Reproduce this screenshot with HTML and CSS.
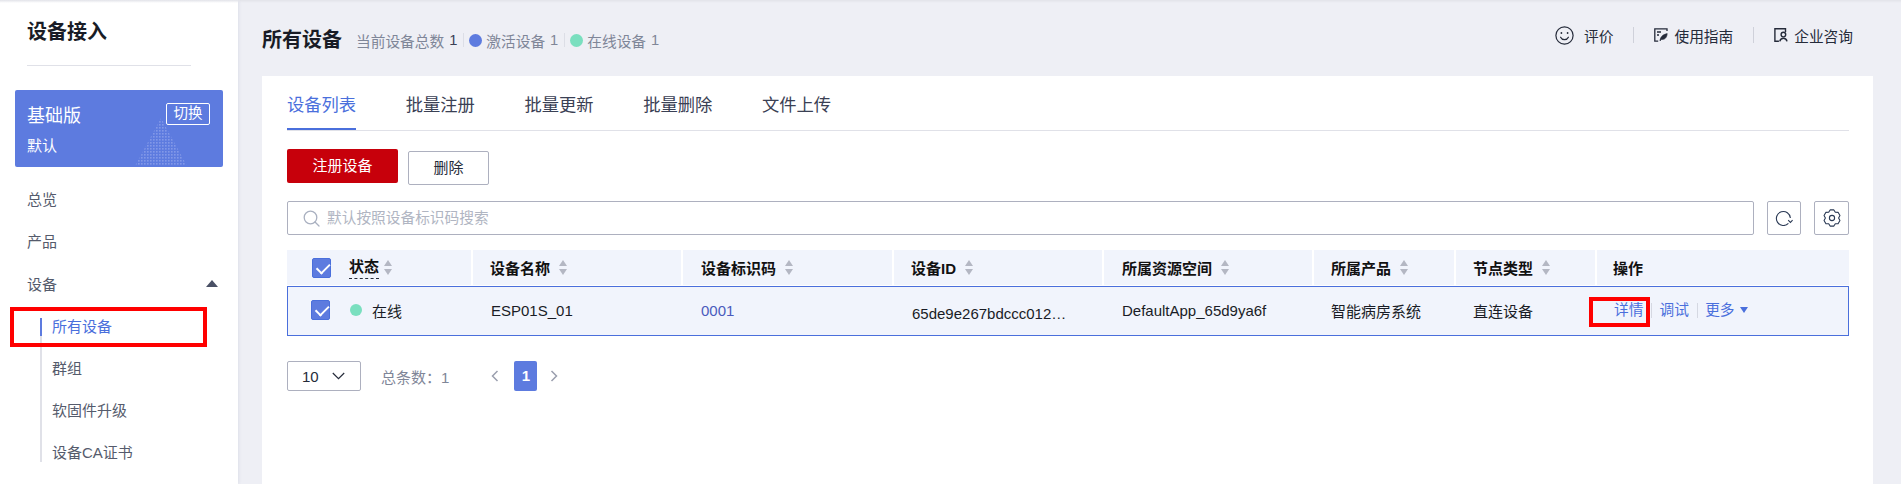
FILE: index.html
```html
<!DOCTYPE html>
<html lang="zh-CN">

<head>
    <meta charset="UTF-8">
    <title>所有设备</title>
    <link rel="stylesheet" href="styles.css">
</head>

<body>

    <aside class="sidebar">
        <h1 class="side-title">设备接入</h1>
        <div class="side-line"></div>

        <div class="plan">
            <svg class="plan-deco" width="52" height="48" viewBox="0 0 52 48">
                <defs>
                    <pattern id="dots" width="3" height="3" patternUnits="userSpaceOnUse">
                        <rect width="1.6" height="1.6" fill="#8298e8"></rect>
                    </pattern>
                </defs>
                <polygon points="26,0 52,48 0,48" fill="url(#dots)"></polygon>
            </svg>
            <div class="plan-top">
                <span class="plan-name">基础版</span>
                <span class="plan-switch">切换</span>
            </div>
            <div class="plan-sub">默认</div>
        </div>

        <ul class="nav">
            <li class="nav-item">总览</li>
            <li class="nav-item">产品</li>
            <li class="nav-item nav-open">设备<i class="caret-up"></i></li>
        </ul>
        <ul class="subnav">
            <li class="subnav-item active">所有设备<span class="mark mark-nav"></span></li>
            <li class="subnav-item">群组</li>
            <li class="subnav-item">软固件升级</li>
            <li class="subnav-item">设备CA证书</li>
        </ul>
    </aside>

    <main class="content">
        <header class="page-head">
            <div class="head-left">
                <h2 class="page-title">所有设备</h2>
                <div class="stats">
                    <span>当前设备总数</span><span class="stat-num dark">1</span>
                    <i class="stat-sep"></i>
                    <i class="dot dot-blue"></i><span>激活设备</span><span class="stat-num">1</span>
                    <i class="stat-sep"></i>
                    <i class="dot dot-green"></i><span>在线设备</span><span class="stat-num">1</span>
                </div>
            </div>
            <div class="head-right">
                <svg class="icon-smile" width="19" height="19" viewBox="0 0 19 19" fill="none" stroke="#252b3a" stroke-width="1.2">
                    <circle cx="9.5" cy="9.5" r="8.6"></circle>
                    <path d="M5.6 11.2c.8 1.7 2.2 2.5 3.9 2.5s3.1-.8 3.9-2.5" stroke-linecap="round"></path>
                    <circle cx="6.4" cy="7" r=".9" fill="#252b3a" stroke="none"></circle>
                    <circle cx="12.6" cy="7" r=".9" fill="#252b3a" stroke="none"></circle>
                </svg>
                <span class="head-link first">评价</span>
                <i class="head-sep"></i>
                <svg width="14" height="14" viewBox="0 0 14 14" fill="none" stroke="#252b3a" stroke-width="1.3">
                    <path d="M13 3V.8H.8v12.4h3.4"></path>
                    <path d="M3 4h4M3 7h2"></path>
                    <path d="M6 13c.2-3.6 2.4-6.5 7.2-7.4C13 9.6 10.6 12 7.4 11.4z" fill="#252b3a" stroke-width=".6"></path>
                </svg>
                <span class="head-link">使用指南</span>
                <i class="head-sep"></i>
                <svg width="14" height="14" viewBox="0 0 14 14" fill="none" stroke="#252b3a" stroke-width="1.4">
                    <path d="M11.5 4V.8H.9v12.4h4"></path>
                    <circle cx="9.4" cy="6.6" r="2.3"></circle>
                    <path d="M5.8 13.4c.4-2 1.8-3.2 3.6-3.2s3.2 1.2 3.6 3.2"></path>
                </svg>
                <span class="head-link">企业咨询</span>
            </div>
        </header>

        <section class="card">
            <nav class="tabs">
                <a class="tab tab-on">设备列表</a>
                <a class="tab">批量注册</a>
                <a class="tab">批量更新</a>
                <a class="tab">批量删除</a>
                <a class="tab">文件上传</a>
            </nav>

            <div class="toolbar">
                <button class="btn btn-red">注册设备</button>
                <button class="btn btn-plain">删除</button>
            </div>

            <div class="search-row">
                <div class="search">
                    <svg width="17" height="17" viewBox="0 0 17 17" fill="none" stroke="#a9b0c0" stroke-width="1.3">
                        <circle cx="7.5" cy="7.5" r="6.3"></circle>
                        <path d="M12 12l4 4" stroke-linecap="round"></path>
                    </svg>
                    <span class="search-hint">默认按照设备标识码搜索</span>
                </div>
                <button class="icon-btn">
                    <svg width="19" height="16" viewBox="0 0 19 16" fill="none" stroke="#2b3a55" stroke-width="1.1">
                        <path d="M13.4 13.4A7 7 0 1 1 15.4 8"></path>
                        <path d="M13.2 10.2l2.2 2.2 2.2-2.2"></path>
                    </svg>
                </button>
                <button class="icon-btn icon-btn-wide">
                    <svg width="18" height="18" viewBox="0 0 18 18" fill="none" stroke="#2b3a55" stroke-width="1.1" stroke-linejoin="round">
                        <polygon points="7.13,.91 10.87,.91 12.3,3.28 15.07,3.34 16.94,6.58 15.6,9 16.94,11.42 15.07,14.66 12.3,14.72 10.87,17.09 7.13,17.09 5.7,14.72 2.93,14.66 1.06,11.42 2.4,9 1.06,6.58 2.93,3.34 5.7,3.28"></polygon>
                        <circle cx="9" cy="9" r="2.6"></circle>
                    </svg>
                </button>
            </div>

            <div class="table">
                <div class="tr th">
                    <div class="cell cell-first">
                        <i class="check"></i>
                        <span class="dashed">状态</span><i class="sort sort-near"></i>
                    </div>
                    <div class="cell">设备名称<i class="sort"></i></div>
                    <div class="cell cell-in">设备标识码<i class="sort"></i></div>
                    <div class="cell">设备ID<i class="sort"></i></div>
                    <div class="cell cell-in">所属资源空间<i class="sort"></i></div>
                    <div class="cell">所属产品<i class="sort"></i></div>
                    <div class="cell">节点类型<i class="sort"></i></div>
                    <div class="cell cell-out">操作</div>
                </div>
                <div class="tr td">
                    <div class="cell cell-first">
                        <i class="check check-row"></i>
                        <i class="dot dot-green dot-row"></i>
                        <span>在线</span>
                    </div>
                    <div class="cell cell-in">ESP01S_01</div>
                    <div class="cell cell-in link">0001</div>
                    <div class="cell cell-in cell-low">65de9e267bdccc012…</div>
                    <div class="cell cell-in">DefaultApp_65d9ya6f</div>
                    <div class="cell">智能病房系统</div>
                    <div class="cell">直连设备</div>
                    <div class="cell ops">
                        <span class="op">详情<span class="mark mark-op"></span></span>
                        <i class="op-sep"></i>
                        <span class="op">调试</span>
                        <i class="op-sep"></i>
                        <span class="op">更多</span><i class="caret-down"></i>
                    </div>
                </div>
            </div>

            <div class="pager">
                <div class="page-size">
                    <span>10</span>
                    <svg width="13" height="8" viewBox="0 0 13 8" fill="none" stroke="#252b3a" stroke-width="1.2">
                        <path d="M.8 1l5.7 5.7L12.2 1"></path>
                    </svg>
                </div>
                <span class="total">总条数：1</span>
                <svg class="page-arrow" width="8" height="12" viewBox="0 0 8 12" fill="none" stroke="#9a9fae" stroke-width="1.5">
                    <path d="M6.5 1L1.5 6l5 5"></path>
                </svg>
                <span class="page-num">1</span>
                <svg class="page-arrow" width="8" height="12" viewBox="0 0 8 12" fill="none" stroke="#9a9fae" stroke-width="1.5">
                    <path d="M1.5 1l5 5-5 5"></path>
                </svg>
            </div>
        </section>
    </main>

</body>

</html>
```

FILE: styles.css
```css
* {
    box-sizing: border-box;
    margin: 0;
    padding: 0;
    font-family: "Liberation Sans", "Noto Sans CJK SC", sans-serif;
}

html,
body {
    height: 484px;
    overflow: hidden;
}

body {
    display: flex;
    position: relative;
    background-color: #eeeff5;
    font-size: 15px;
    color: #252b3a;
}

/* thin shade along the top of the window */
body::before {
    content: "";
    position: absolute;
    top: 0;
    left: 0;
    right: 0;
    height: 3px;
    background: linear-gradient(#e2e3e9, rgba(238, 239, 245, 0));
    z-index: 2;
}

i {
    display: block;
    font-style: normal;
}

ul {
    list-style: none;
}

/* sidebar */
.sidebar {
    flex: 0 0 238px;
    background-color: #fff;
    box-shadow: 1px 0 3px rgba(40, 50, 90, .08);
}

.side-title {
    height: 65px;
    padding-left: 27px;
    font-size: 20px;
    line-height: 65px;
    color: #191c26;
}

.side-line {
    width: 164px;
    height: 1px;
    margin-left: 27px;
    background-color: #e0e1e8;
}

.plan {
    position: relative;
    width: 208px;
    height: 77px;
    margin: 24px 0 0 15px;
    padding: 13px 13px 0 12px;
    border-radius: 2px;
    background-color: #5d7bdf;
    color: #fff;
}

.plan-deco {
    position: absolute;
    left: 120px;
    bottom: 1px;
}

.plan-top {
    position: relative;
    display: flex;
    justify-content: space-between;
    align-items: center;
    height: 22px;
}

.plan-name {
    font-size: 18px;
}

.plan-switch {
    width: 44px;
    height: 22px;
    border: 1px solid #fff;
    border-radius: 2px;
    font-size: 14.5px;
    line-height: 19px;
    text-align: center;
}

.plan-sub {
    position: relative;
    margin-top: 11px;
    line-height: 20px;
}

.nav {
    margin-top: 10px;
}

.nav-item {
    display: flex;
    justify-content: space-between;
    align-items: center;
    height: 42px;
    padding: 0 20px 0 27px;
    color: #555b6c;
}

.nav-open {
    margin-top: 1px;
}

.caret-up {
    width: 0;
    height: 0;
    border-left: 6px solid transparent;
    border-right: 6px solid transparent;
    border-bottom: 7px solid #4a5065;
}

.subnav {
    margin: 14px 0 0 40px;
    border-left: 2px solid #e0e1e8;
}

.subnav-item {
    position: relative;
    height: 18px;
    margin-bottom: 24px;
    padding-left: 10px;
    line-height: 18px;
    color: #555b6c;
}

.subnav-item:last-child {
    margin-bottom: 0;
}

.subnav-item.active {
    margin-left: -2px;
    border-left: 2px solid #5d7bdf;
    color: #4a6fdc;
}

/* red annotation boxes from the screenshot */
.mark {
    position: absolute;
    border: 4px solid #ff0000;
}

.mark-nav {
    left: -32px;
    top: -11px;
    width: 197px;
    height: 40px;
}

.mark-op {
    left: -25px;
    top: -3px;
    width: 61px;
    height: 30px;
}

/* main */
.content {
    flex: 1;
    padding: 0 28px 0 24px;
}

.page-head {
    display: flex;
    justify-content: space-between;
    height: 76px;
    padding-right: 20px;
}

.head-left {
    display: flex;
    align-items: center;
    padding-top: 4px;
}

.page-title {
    margin-right: 14px;
    padding-bottom: 4px;
    font-size: 20px;
    color: #191c26;
}

.stats {
    display: flex;
    align-items: center;
    font-size: 14.7px;
    color: #7f8698;
}

.stat-num {
    margin: 0 5.5px 0 5px;
}

.dark {
    color: #3a4054;
}

.stat-sep {
    width: 1px;
    height: 14px;
    margin-right: 5.5px;
    background-color: #dcdee6;
}

.dot {
    width: 13px;
    height: 13px;
    margin-right: 4px;
    border-radius: 50%;
}

.dot-blue {
    background-color: #5d7bdf;
}

.dot-green {
    background-color: #7adfbf;
}

.head-right {
    display: flex;
    align-items: center;
    height: 70px;
    font-size: 14.7px;
}

.head-link {
    margin-left: 6px;
}

.head-link.first {
    margin-left: 10px;
}

.head-sep {
    width: 1px;
    height: 16px;
    margin: 0 20px;
    background-color: #cfd1da;
}

.card {
    height: 408px;
    padding: 0 24px 0 25px;
    background-color: #fff;
}

.tabs {
    display: flex;
    gap: 49.6px;
    height: 55px;
    border-bottom: 1px solid #e0e1e8;
}

.tab {
    height: 54px;
    padding-top: 17px;
    font-size: 17.3px;
    line-height: 24px;
    color: #3a4054;
}

.tab-on {
    border-bottom: 2px solid #4a6fdc;
    color: #4a6fdc;
}

.toolbar {
    display: flex;
    align-items: flex-start;
    gap: 10px;
    margin-top: 18px;
}

.btn {
    height: 34px;
    padding-bottom: 3px;
    border-radius: 2px;
    font-size: 15px;
}

.btn-red {
    width: 111px;
    border: 0;
    background-color: #c7000b;
    color: #fff;
}

.btn-plain {
    width: 81px;
    margin-top: 2px;
    border: 1px solid #adb0bf;
    background-color: #fff;
    color: #252b3a;
}

.search-row {
    display: flex;
    margin-top: 16px;
}

.search {
    display: flex;
    flex: 1;
    align-items: center;
    gap: 7px;
    height: 34px;
    padding-left: 15px;
    border: 1px solid #adb0bf;
    border-radius: 2px;
    font-size: 14.7px;
    color: #b0b5c2;
}

.search-hint {
    padding-bottom: 4px;
}

.icon-btn {
    display: flex;
    justify-content: center;
    align-items: center;
    width: 34px;
    height: 34px;
    margin-left: 13px;
    border: 1px solid #adb0bf;
    border-radius: 2px;
    background-color: #fff;
}

.icon-btn-wide {
    width: 35px;
}

/* table */
.table {
    margin-top: 15px;
}

.tr {
    display: grid;
    grid-template-columns: 186px 210px 211px 210px 210px 142px 141px 252px;
    background-color: #f1f4fc;
}

.th {
    height: 35px;
    margin-bottom: 1px;
    font-weight: bold;
    color: #111;
}

.td {
    height: 50px;
    box-shadow: inset 0 0 0 1px #4a6fdc;
    color: #191c26;
}

.cell {
    display: flex;
    align-items: center;
    padding-left: 17px;
    white-space: nowrap;
    border-right: 2px solid transparent;
}

.cell.cell-in {
    padding-left: 18px;
}

.cell.cell-out {
    padding-left: 16px;
}

.td .cell {
    padding-bottom: 2px;
}

.th .cell {
    border-right-color: #fff;
}

.th .cell:last-child {
    border-right: 0;
}

.td .cell-first,
.th .cell-first {
    padding-left: 25px;
}

.td .cell-low {
    padding-top: 4px;
    padding-bottom: 0;
}

.link {
    color: #4a5bbd;
}

.check {
    position: relative;
    width: 19px;
    height: 20px;
    margin-right: 18px;
    border: 1px solid #4a6fdc;
    border-radius: 2px;
    background-color: #5d7bdf;
}

.check::after {
    content: "";
    position: absolute;
    left: 3px;
    top: 2px;
    width: 11px;
    height: 6px;
    border-left: 2px solid #fff;
    border-bottom: 2px solid #fff;
    transform: rotate(-45deg) translate(-1px, 2px);
}

.check-row {
    margin-left: -1px;
    margin-right: 20px;
}

.dot-row {
    width: 12px;
    height: 12px;
    margin-right: 10px;
}

.dashed {
    height: 22px;
    border-bottom: 1px dashed #252b3a;
    line-height: 20px;
}

.sort {
    position: relative;
    width: 8px;
    height: 15px;
    margin-left: 9px;
}

.sort-near {
    margin-left: 5px;
}

.sort::before,
.sort::after {
    content: "";
    position: absolute;
    left: 0;
    border-left: 4px solid transparent;
    border-right: 4px solid transparent;
}

.sort::before {
    top: 0;
    border-bottom: 6px solid #b4b7c3;
}

.sort::after {
    bottom: 0;
    border-top: 6px solid #b4b7c3;
}

.ops {
    font-size: 14.7px;
}

.op {
    position: relative;
    line-height: 20px;
    color: #4a6fdc;
}

.op-sep {
    width: 1px;
    height: 15px;
    margin: 0 7.6px;
    background-color: #d5d8e2;
}

.caret-down {
    margin-left: 5px;
    border-left: 4px solid transparent;
    border-right: 4px solid transparent;
    border-top: 6px solid #4a6fdc;
}

/* pagination */
.pager {
    display: flex;
    align-items: center;
    height: 30px;
    margin-top: 25px;
}

.page-size {
    display: flex;
    justify-content: space-between;
    align-items: center;
    width: 74px;
    height: 30px;
    padding: 0 15px 0 14px;
    border: 1px solid #adb0bf;
    border-radius: 2px;
}

.total {
    margin: 0 42px 0 20px;
    color: #7f8698;
}

.page-num {
    width: 23px;
    height: 30px;
    margin: 0 13px 0 15px;
    border-radius: 2px;
    background-color: #5d7bdf;
    color: #fff;
    font-weight: bold;
    line-height: 30px;
    text-align: center;
}
```
